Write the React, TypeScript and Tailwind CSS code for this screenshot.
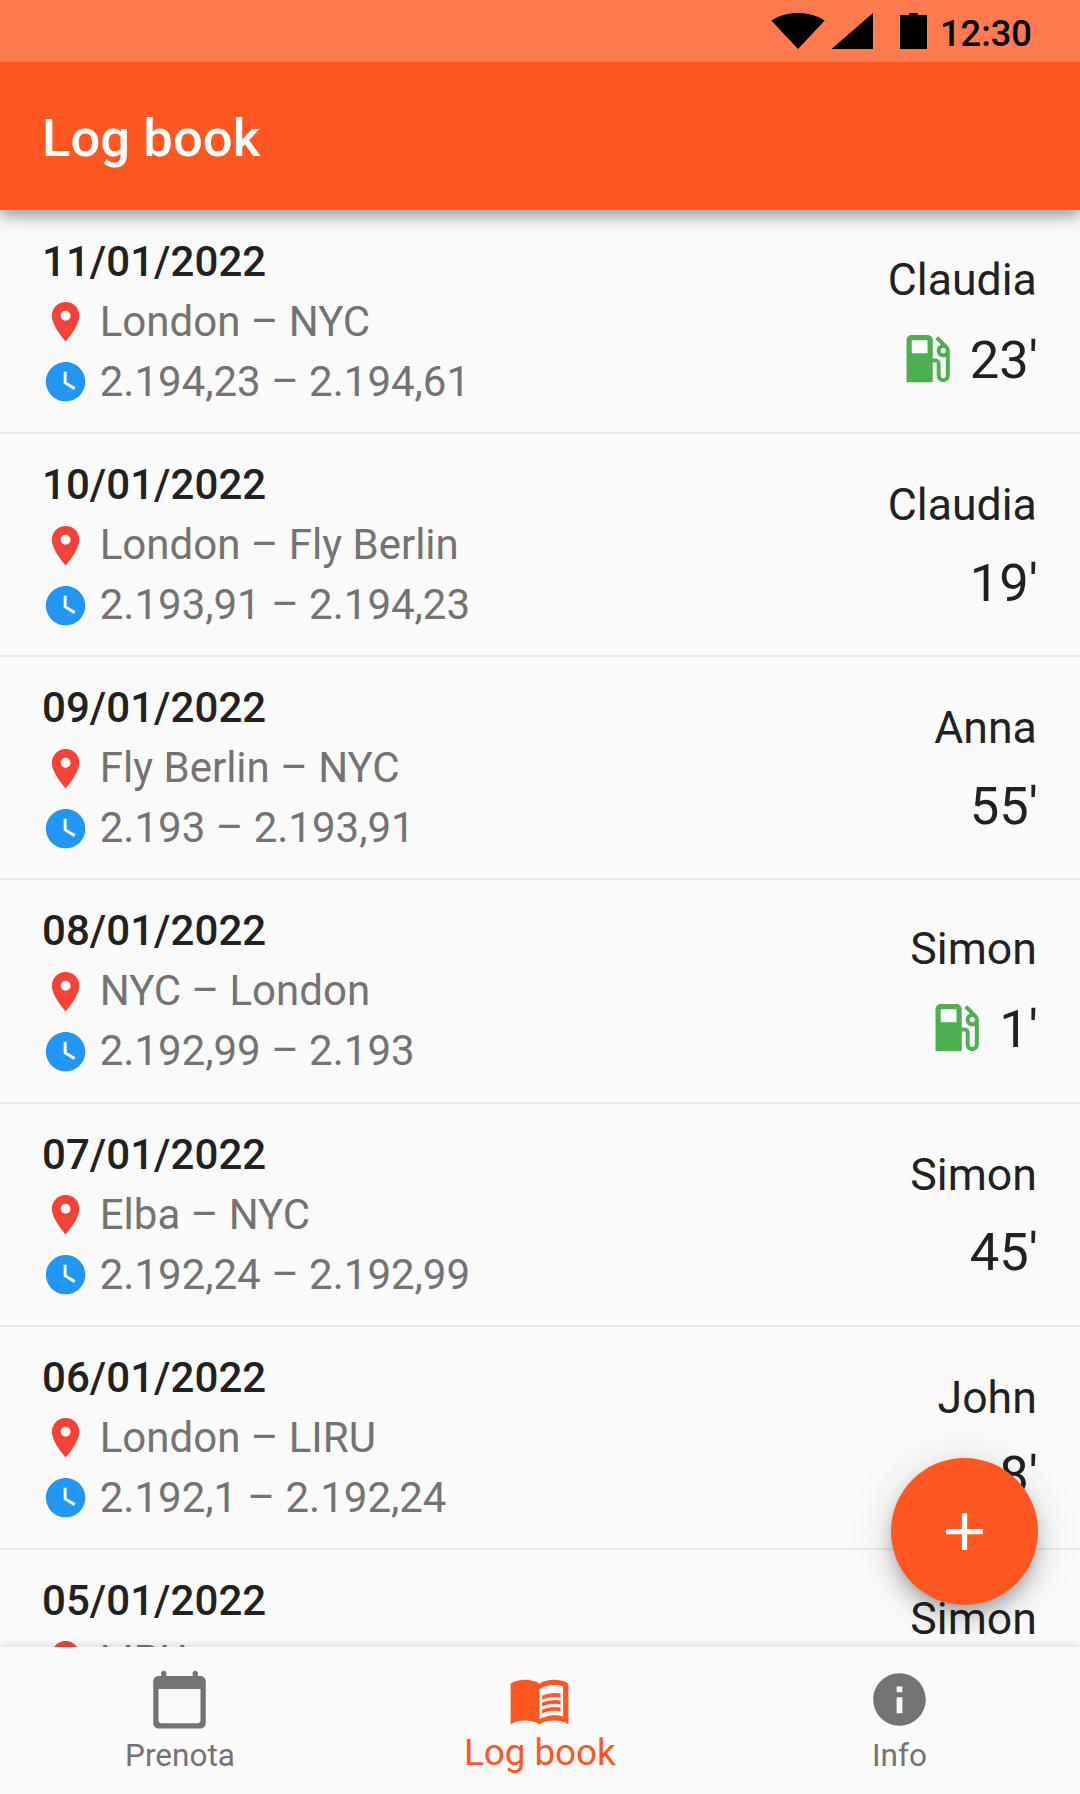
type Flight = { date: string; route: string; hours: string; pilot: string; minutes: string; fuel?: boolean };

const flights: Flight[] = [
  { date: "11/01/2022", route: "London – NYC", hours: "2.194,23 – 2.194,61", pilot: "Claudia", minutes: "23'", fuel: true },
  { date: "10/01/2022", route: "London – Fly Berlin", hours: "2.193,91 – 2.194,23", pilot: "Claudia", minutes: "19'" },
  { date: "09/01/2022", route: "Fly Berlin – NYC", hours: "2.193 – 2.193,91", pilot: "Anna", minutes: "55'" },
  { date: "08/01/2022", route: "NYC – London", hours: "2.192,99 – 2.193", pilot: "Simon", minutes: "1'", fuel: true },
  { date: "07/01/2022", route: "Elba – NYC", hours: "2.192,24 – 2.192,99", pilot: "Simon", minutes: "45'" },
  { date: "06/01/2022", route: "London – LIRU", hours: "2.192,1 – 2.192,24", pilot: "John", minutes: "8'" },
  { date: "05/01/2022", route: "LIRU", hours: "2.192 – 2.192,1", pilot: "Simon", minutes: "6'", fuel: true },
];

function Icon({ d, className }: { d: string; className: string }) {
  return (
    <svg viewBox="0 0 24 24" className={className} fill="currentColor" fillRule="evenodd">
      <path d={d} />
    </svg>
  );
}

const PIN = "M12 2C8.13 2 5 5.13 5 9c0 5.25 7 13 7 13s7-7.75 7-13c0-3.87-3.13-7-7-7zm0 9.5c-1.38 0-2.5-1.12-2.5-2.5s1.12-2.5 2.5-2.5 2.5 1.12 2.5 2.5-1.12 2.5-2.5 2.5z";
const CLOCK = "M12 2C6.5 2 2 6.5 2 12s4.5 10 10 10 10-4.5 10-10S17.5 2 12 2zm4.2 14.2L11 13V7h1.5v5.2l4.5 2.7-.8 1.3z";
const GAS = "M19.77 7.23l.01-.01-3.72-3.72L15 4.56l2.11 2.11c-.94.36-1.61 1.26-1.61 2.33 0 1.38 1.12 2.5 2.5 2.5.36 0 .69-.08 1-.21v7.21c0 .55-.45 1-1 1s-1-.45-1-1V14c0-1.1-.9-2-2-2h-1V5c0-1.1-.9-2-2-2H6c-1.1 0-2 .9-2 2v16h10v-7.5h1.5v5c0 1.38 1.12 2.5 2.5 2.5s2.5-1.12 2.5-2.5V9c0-.69-.28-1.32-.73-1.77zM12 10H6V5h6v5zm6 0c-.55 0-1-.45-1-1s.45-1 1-1 1 .45 1 1-.45 1-1 1z";
const CALENDAR = "M20 3h-1V2c0-.55-.45-1-1-1s-1 .45-1 1v1H7V2c0-.55-.45-1-1-1s-1 .45-1 1v1H4c-1.1 0-2 .9-2 2v16c0 1.1.9 2 2 2h16c1.1 0 2-.9 2-2V5c0-1.1-.9-2-2-2zm-1 18H5c-.55 0-1-.45-1-1V8h16v12c0 .55-.45 1-1 1z";
const BOOK = "M1 6c1.45-1.1 3.55-1.5 5.5-1.5s4.05.4 5.5 1.5c1.45-1.1 3.55-1.5 5.5-1.5s4.05.4 5.5 1.5v15.5c-1.45-1.1-3.55-1.5-5.5-1.5s-4.05.4-5.5 1.5c-1.45-1.1-3.55-1.5-5.5-1.5s-4.05.4-5.5 1.5zM21 7c-1.1-.35-2.3-.5-3.5-.5-1.7 0-4.15.65-5.5 1.5v11.5c1.35-.85 3.8-1.5 5.5-1.5 1.2 0 2.4.15 3.5.5zM13 10.6c1.4-.8 3.2-1.1 5-1.1.7 0 1.37.07 2 .2v1.5c-.6-.13-1.3-.2-2-.2-1.7 0-3.7.3-5 1.1zM13 13.26c1.4-.8 3.2-1.1 5-1.1.7 0 1.37.07 2 .2v1.5c-.6-.13-1.3-.2-2-.2-1.7 0-3.7.3-5 1.1zM13 15.93c1.4-.8 3.2-1.1 5-1.1.7 0 1.37.07 2 .2v1.5c-.6-.13-1.3-.2-2-.2-1.7 0-3.7.3-5 1.1z";
const INFO = "M12 2C6.48 2 2 6.48 2 12s4.48 10 10 10 10-4.48 10-10S17.52 2 12 2zm1.1 15.2h-2.2v-6.1h2.2zm0-8h-2.2V7h2.2z";
const PLUS = "M19 13h-6v6h-2v-6H5v-2h6V5h2v6h6v2z";

function StatusBar() {
  return (
    <div className="flex h-[62px] shrink-0 items-start bg-[#ff7a4e] text-black">
      <svg viewBox="0 0 160 36" className="mt-[13px] ml-[771px] h-9 w-40 shrink-0">
        <path d="M0.3 7.6C8 2.5 17 0 27 0s19 2.5 26.7 7.6L27 36z" />
        <path d="M60.5 36L102 0v36z" />
        <path d="M129 2h9V0h9v2h9v34h-27z" />
      </svg>
      <span className="ml-[9px] mt-[12px] text-[36.25px] leading-[43px] font-medium">12:30</span>
    </div>
  );
}

function FlightRow({ flight }: { flight: Flight }) {
  return (
    <li className="flex h-[223.125px] shrink-0 justify-between border-b-2 border-[#e9e9e9] px-[42px]">
      <div className="flex flex-col pt-[21px]">
        <span className="text-[42px] leading-[60px] font-medium tracking-[0.05px]">{flight.date}</span>
        <span className="flex items-center text-[42px] leading-[60px] text-[#737373]">
          <Icon d={PIN} className="mr-[10.5px] size-[47.25px] text-[#f44336]" />
          {flight.route}
        </span>
        <span className="flex items-center text-[42px] leading-[60px] text-[#737373]">
          <Icon d={CLOCK} className="mr-[10.5px] size-[47.25px] text-[#2196f3]" />
          {flight.hours}
        </span>
      </div>
      <div className={flight.fuel ? "flex flex-col items-end pt-[43px]" : "flex flex-col items-end pt-[45px]"}>
        <span className="mr-[1.2px] text-[44.6px] leading-[52px]">{flight.pilot}</span>
        <span className={flight.fuel ? "mt-[21px] flex h-[63px] items-center" : "mt-[19px] flex h-[63px] items-center"}>
          {flight.fuel && <Icon d={GAS} className="mr-[11px] size-[63px] text-[#4caf50]" />}
          <span className="pt-[2px] text-[52.5px] leading-[62px]">{flight.minutes}</span>
        </span>
      </div>
    </li>
  );
}

export default function App() {
  return (
    <div className="relative flex h-[1794px] w-[1080px] flex-col overflow-hidden bg-[#fafafa] font-['Roboto',sans-serif] whitespace-nowrap text-[#212121]">
      <header className="z-10 shrink-0 shadow-[0_5px_10px_-2px_rgba(0,0,0,0.2),0_10px_13px_rgba(0,0,0,0.14),0_2px_26px_rgba(0,0,0,0.12)]">
        <StatusBar />
        <div className="flex h-[148px] items-center bg-[#ff5722] px-[42px] pt-[4px] text-white">
          <h1 className="text-[52.5px] leading-[62px] font-medium tracking-[0.1px]">Log book</h1>
        </div>
      </header>
      <ul className="flex min-h-0 flex-1 flex-col overflow-hidden pt-px">
        {flights.map((flight) => (
          <FlightRow key={flight.date} flight={flight} />
        ))}
      </ul>
      <nav className="z-10 flex h-[147px] shrink-0 bg-[#fafafa] text-[#737373] shadow-[0_-2px_8px_rgba(0,0,0,0.12)]">
        <div className="flex flex-1 flex-col items-center pt-[21px]">
          <Icon d={CALENDAR} className="mr-[0.6px] size-[63px]" />
          <span className="mt-[7px] text-[31.5px] leading-9">Prenota</span>
        </div>
        <div className="flex flex-1 flex-col items-center pt-[21px] text-[#ff5722]">
          <Icon d={BOOK} className="mr-[0.6px] size-[63px]" />
          <span className="mr-[0.5px] text-[36.75px] leading-[43px]">Log book</span>
        </div>
        <div className="flex flex-1 flex-col items-center pt-[21px]">
          <Icon d={INFO} className="mr-[0.6px] size-[63px]" />
          <span className="mt-[7px] mr-px text-[31.5px] leading-9">Info</span>
        </div>
      </nav>
      <button className="absolute right-[42px] bottom-[189px] flex size-[147px] items-center justify-center rounded-full bg-[#ff5722] text-white shadow-[0_8px_13px_-3px_rgba(0,0,0,0.2),0_16px_26px_rgba(0,0,0,0.14),0_3px_47px_rgba(0,0,0,0.12)]">
        <Icon d={PLUS} className="size-[63px]" />
      </button>
    </div>
  );
}
